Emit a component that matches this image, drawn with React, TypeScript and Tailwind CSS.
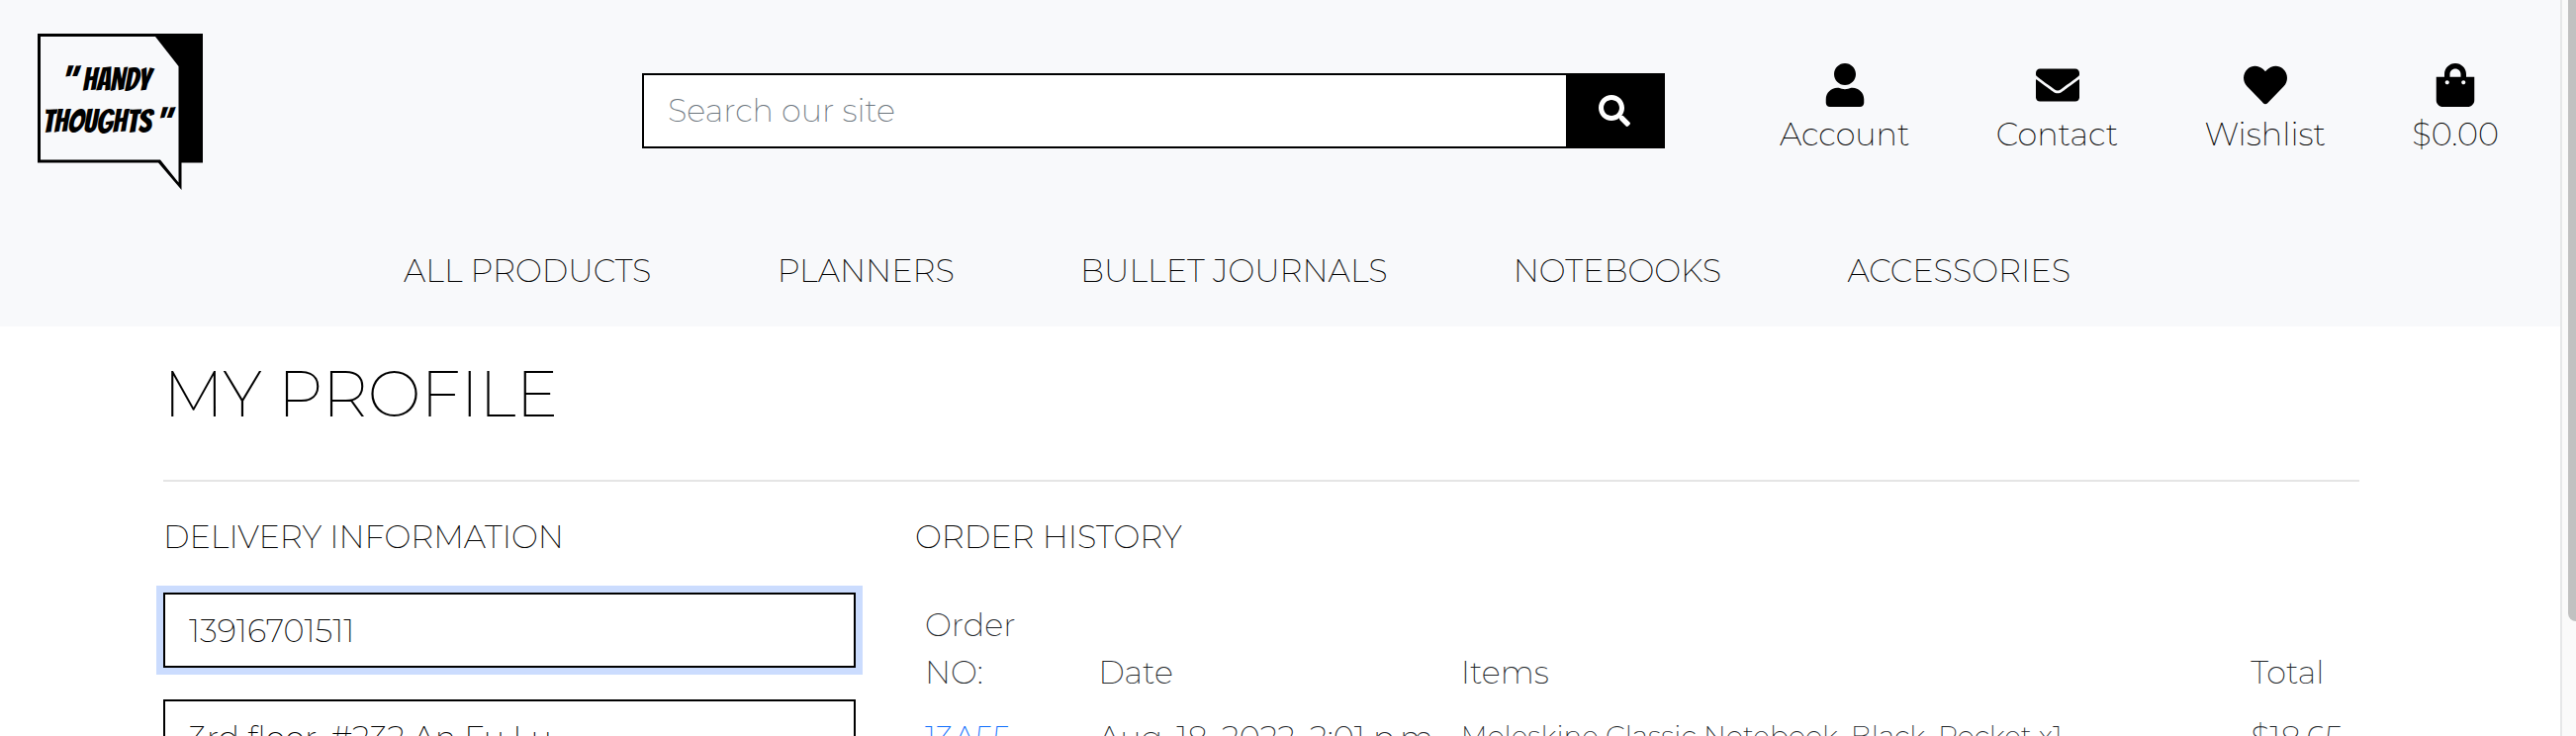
import { FaEnvelope, FaHeart, FaSearch, FaShoppingBag, FaUser } from 'react-icons/fa';

const quickLinks = [
  { label: 'Account', Icon: FaUser },
  { label: 'Contact', Icon: FaEnvelope },
  { label: 'Wishlist', Icon: FaHeart },
  { label: '$0.00', Icon: FaShoppingBag },
];

const categories = ['ALL PRODUCTS', 'PLANNERS', 'BULLET JOURNALS', 'NOTEBOOKS', 'ACCESSORIES'];

const orders = [
  {
    id: '13A55',
    date: 'Aug. 18, 2022, 2:01 p.m.',
    items: 'Moleskine Classic Notebook, Black, Pocket x1',
    total: '$18.65',
  },
];

function Logo() {
  return (
    <svg width="168" height="160" viewBox="0 -2 168 160" role="img" aria-label="Handy Thoughts" className="block">
      <path d="M0 0H167V130.5H145.5V158L122 130.5H0Z" fill="#000" />
      <path d="M3 3H119L142.5 33V150.500L124 127.500H3Z" fill="#f8f9fb" />
      <g
        fontFamily="Bangers, Roboto, sans-serif"
        fontSize="32"
        fontWeight="400"
        textAnchor="middle"
      >
        <text x="70" y="58">&quot; HANDY</text>
        <text x="70" y="100">THOUGHTS &quot;</text>
      </g>
    </svg>
  );
}

function Header() {
  return (
    <header className="bg-[#f8f9fb] text-black">
      <div className="grid grid-cols-[649fr_1034fr_905fr] items-center py-8">
        <a href="#home" className="pl-[38px]">
          <Logo />
        </a>
        <form className="flex h-[76px] border-2 border-black bg-white" onSubmit={(e) => e.preventDefault()}>
          <input
            type="search"
            aria-label="Search our site"
            placeholder="Search our site"
            className="min-w-0 flex-1 px-6 text-[32px] outline-none placeholder:text-[#6c757d]"
          />
          <button type="submit" aria-label="Search" className="flex w-[98px] items-center justify-center bg-black text-white">
            <FaSearch className="size-8" />
          </button>
        </form>
        <div className="flex justify-between pr-[62px] pl-[116px]">
          {quickLinks.map(({ label, Icon }) => (
            <a key={label} href={`#${label}`} className="flex flex-col items-center gap-1 text-[32px] leading-[48px]">
              <Icon className="size-11" />
              {label}
            </a>
          ))}
        </div>
      </div>
      <nav className="flex justify-between pt-[26px] pr-[495px] pb-8 pl-[408px] text-[32px] leading-[48px]">
        {categories.map((name) => (
          <a key={name} href={`#${name}`} className="whitespace-nowrap">
            {name}
          </a>
        ))}
      </nav>
    </header>
  );
}

const fieldClass =
  'h-[76px] w-full border-2 border-black bg-white px-6 text-[32px] text-black outline-none focus:shadow-[0_0_0_7px_#cbdcfe]';

export default function App() {
  return (
    <div className="flex h-screen overflow-hidden bg-white font-[Montserrat,Inter,sans-serif] font-extralight">
      <div className="min-w-0 flex-1">
        <Header />
        <main className="pt-7 pr-[203px] pl-[165px]">
          <h1 className="mb-[47px] text-[64px] leading-[80px] text-black">MY PROFILE</h1>
          <hr className="border-t-2 border-[#e5e5e5]" />
          <div className="grid grid-cols-[700fr_1460fr] gap-[60px] pt-8 font-[180]">
            <section>
              <h2 className="mb-8 text-[32px] leading-[48px] text-black">DELIVERY INFORMATION</h2>
              <form className="flex flex-col gap-8">
                <input
                  type="tel"
                  aria-label="Phone number"
                  defaultValue="13916701511"
                  className={`${fieldClass} shadow-[0_0_0_7px_#cbdcfe]`}
                />
                <input
                  type="text"
                  aria-label="Street address"
                  defaultValue="3rd floor, #232 An Fu Lu"
                  className={fieldClass}
                />
              </form>
            </section>
            <section>
              <h2 className="mb-8 text-[32px] leading-[48px] text-black">ORDER HISTORY</h2>
              <table className="w-full table-fixed text-left text-[32px] leading-[48px] text-[#212529]">
                <thead className="align-bottom">
                  <tr>
                    <th className="w-[12%] px-2.5 py-[9px] font-extralight">
                      Order
                      <br />
                      NO:
                    </th>
                    <th className="w-[25.1%] px-2.5 py-[9px] font-extralight">Date</th>
                    <th className="w-[54.7%] px-2.5 py-[9px] font-extralight">Items</th>
                    <th className="w-[8.2%] px-2.5 py-[9px] font-extralight">Total</th>
                  </tr>
                </thead>
                <tbody className="align-top whitespace-nowrap">
                  {orders.map((order) => (
                    <tr key={order.id}>
                      <td className="px-2.5 py-[9px]">
                        <a href={`#${order.id}`} className="text-[#0d6efd]">
                          {order.id}
                        </a>
                      </td>
                      <td className="px-2.5 py-[9px]">{order.date}</td>
                      <td className="px-2.5 py-[9px] text-[28px] leading-[44px]">{order.items}</td>
                      <td className="px-2.5 py-[9px]">{order.total}</td>
                    </tr>
                  ))}
                </tbody>
              </table>
            </section>
          </div>
        </main>
      </div>
      <div aria-hidden="true" className="w-4 border-l-2 border-[#e6e7e8] bg-[#fafafa] pl-1.5">
        <div className="h-[84.4%] rounded-bl-lg bg-[#c1c1c1]" />
      </div>
    </div>
  );
}
